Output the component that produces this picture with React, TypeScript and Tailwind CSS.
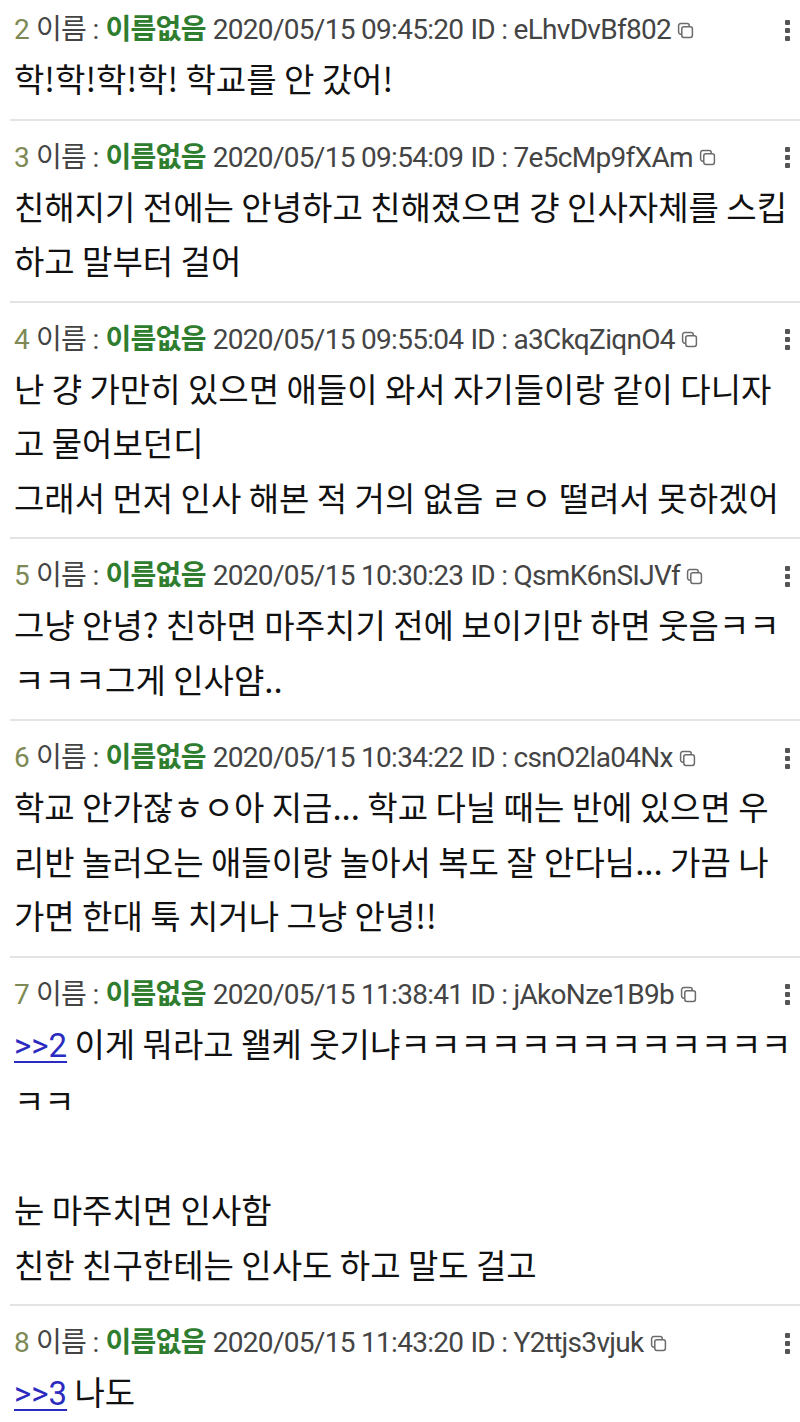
import React from 'react';

type Line = { anchor?: string; text: string; tail?: string };

type Post = {
  no: number;
  time: string;
  id: string;
  lines: Line[];
};

const posts: Post[] = [
  { no: 2, time: '2020/05/15 09:45:20', id: 'eLhvDvBf802', lines: [{ text: '학!학!학!학! 학교를 안 갔어!' }] },
  {
    no: 3,
    time: '2020/05/15 09:54:09',
    id: '7e5cMp9fXAm',
    lines: [{ text: '친해지기 전에는 안녕하고 친해졌으면 걍 인사자체를 스킵' }, { text: '하고 말부터 걸어' }],
  },
  {
    no: 4,
    time: '2020/05/15 09:55:04',
    id: 'a3CkqZiqnO4',
    lines: [
      { text: '난 걍 가만히 있으면 애들이 와서 자기들이랑 같이 다니자' },
      { text: '고 물어보던디' },
      { text: '그래서 먼저 인사 해본 적 거의 없음 ㄹㅇ 떨려서 못하겠어' },
    ],
  },
  {
    no: 5,
    time: '2020/05/15 10:30:23',
    id: 'QsmK6nSIJVf',
    lines: [{ text: '그냥 안녕? 친하면 마주치기 전에 보이기만 하면 웃음ㅋㅋ' }, { text: 'ㅋㅋㅋ그게 인사얌..' }],
  },
  {
    no: 6,
    time: '2020/05/15 10:34:22',
    id: 'csnO2la04Nx',
    lines: [
      { text: '학교 안가잖ㅎㅇ아 지금... 학교 다닐 때는 반에 있으면 우' },
      { text: '리반 놀러오는 애들이랑 놀아서 복도 잘 안다님... 가끔 나' },
      { text: '가면 한대 툭 치거나 그냥 안녕!!' },
    ],
  },
  {
    no: 7,
    time: '2020/05/15 11:38:41',
    id: 'jAkoNze1B9b',
    lines: [
      { anchor: '>>2', text: '이게 뭐라고 왤케 웃기냐', tail: 'ㅋㅋㅋㅋㅋㅋㅋㅋㅋㅋㅋㅋㅋ' },
      { text: 'ㅋㅋ' },
      { text: '\u00a0' },
      { text: '눈 마주치면 인사함' },
      { text: '친한 친구한테는 인사도 하고 말도 걸고' },
    ],
  },
  { no: 8, time: '2020/05/15 11:43:20', id: 'Y2ttjs3vjuk', lines: [{ anchor: '>>3', text: '나도' }] },
];

const CopyIcon = () => (
  <svg viewBox="0 0 16 16" className="ml-[6px] h-[17px] w-[17px] shrink-0" fill="none" stroke="#6b6b6b" strokeWidth="1.4">
    <rect x="1.5" y="1.5" width="10" height="10" rx="2" />
    <rect x="4.5" y="4.5" width="10" height="10" rx="2" fill="#fff" />
  </svg>
);

const Dots = () => (
  <div className="ml-auto mr-[10px] flex flex-col gap-[3px]">
    <span className="block h-[5px] w-[5px] rounded-[1px] bg-[#555]" />
    <span className="block h-[5px] w-[5px] rounded-[1px] bg-[#555]" />
    <span className="block h-[5px] w-[5px] rounded-[1px] bg-[#555]" />
  </div>
);

const PostItem: React.FC<{ post: Post; first: boolean }> = ({ post, first }) => (
  <div className={`ml-[10px] pl-[4px] pb-[13px] ${first ? 'pt-[13px]' : 'border-t-2 border-[#e4e4e4] pt-[20px]'}`}>
    <div
      className="flex h-[34px] items-center whitespace-nowrap text-[28px] tracking-[-0.7px] text-[#444]"
      style={{ fontFamily: 'Roboto, "Noto Sans CJK KR", sans-serif' }}
    >
      <span className="text-[#7d8a55]">{post.no}</span>
      <span className="ml-[7px]">이름 :</span>
      <span className="ml-[7px] font-bold text-[#2f7d2f]">이름없음</span>
      <span className="ml-[7px]">{post.time}</span>
      <span className="ml-[7px]">ID : {post.id}</span>
      <CopyIcon />
      <Dots />
    </div>
    <div
      className="mt-[4px] text-[33px] leading-[54.5px] text-[#111]"
      style={{ fontFamily: '"Noto Sans CJK KR", sans-serif' }}
    >
      {post.lines.map((l, i) => (
        <div key={i} className="whitespace-nowrap">
          {l.anchor ? (
            <>
              <a
                href="#"
                className="text-[#2b2bbf] underline decoration-2 underline-offset-[4px]"
                style={{ fontFamily: 'Roboto, sans-serif' }}
              >
                {l.anchor}
              </a>{' '}
            </>
          ) : null}
          {l.text}
          {l.tail ? <span className="tracking-[-0.3px]">{l.tail}</span> : null}
        </div>
      ))}
    </div>
  </div>
);

export default function App() {
  return (
    <div className="h-[1422px] w-[800px] overflow-hidden bg-white">
      {posts.map((p, i) => (
        <PostItem key={p.no} post={p} first={i === 0} />
      ))}
    </div>
  );
}
